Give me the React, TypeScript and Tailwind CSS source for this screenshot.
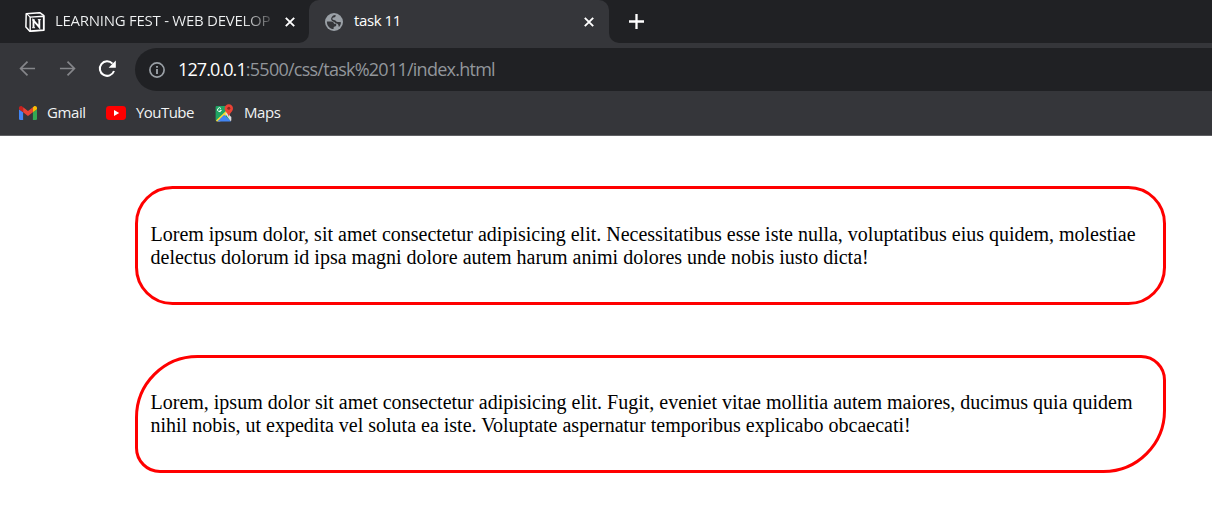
import React from "react";

function NotionIcon() {
  return (
    <svg className="h-5 w-5 shrink-0" viewBox="0 0 20 20">
      <path d="M1.2 1.8 14.8.7 18.9 3.6V18.2L4.8 19.3.9 15.1Z" fill="#202124" stroke="#fff" strokeWidth="1.5" strokeLinejoin="round" />
      <path d="M5.2 5.1 18.6 4.2V18L5.2 18.9Z" fill="#202124" stroke="#fff" strokeWidth="1.4" strokeLinejoin="round" />
      <path d="M2 2.2 5.2 5.1" stroke="#fff" strokeWidth="1.1" />
      <path d="M8.5 15.4V8.5L14.3 15.2V7.9" fill="none" stroke="#fff" strokeWidth="1.9" />
      <path d="M7 8h3M7.2 15.7h2.9M12.8 7.6h3" stroke="#fff" strokeWidth="1" />
    </svg>
  );
}

function GlobeIcon() {
  return (
    <svg className="h-[18px] w-[18px] shrink-0" viewBox="0 0 18 18">
      <circle cx="9" cy="9" r="9" fill="#9aa0a6" />
      <path d="M1.9 8.4H6C8.2 8.4 9 9.4 9 10.8H11.2V12.8C10.6 13.6 9.2 13.2 8.6 14.4V16C4.8 15.8 1.7 12.5 1.9 8.4ZM10.6 2.1C10.8 3.8 10 4.6 8.6 4.6 7.2 4.8 7 6.2 8 6.8 9.4 7.4 10.4 6.8 11 8.2 11.8 9.4 13.6 8.6 16 9.2 15.9 11.1 15.1 12.9 13.8 14.1 13.7 12.5 13.4 11 11.6 10.4 10 10.2 9.8 8.8 8 8.4 6.4 7.8 5.6 6.2 6.4 4.8 7.2 3.2 8.4 2 10.6 2.1Z" fill="#35363a" />
    </svg>
  );
}

function CloseIcon() {
  return (
    <svg className="h-[10px] w-[10px] shrink-0" viewBox="0 0 10 10">
      <path d="m.8.8 8.4 8.4M9.2.8.8 9.2" stroke="#fff" strokeWidth="1.9" />
    </svg>
  );
}

function ArrowIcon({ className }: { className?: string }) {
  return (
    <svg className={className} viewBox="0 0 18 18" fill="none" stroke="#85868a" strokeWidth="1.8">
      <path d="M17 9H2M9 1.7 1.7 9 9 16.3" />
    </svg>
  );
}

function ReloadIcon() {
  return (
    <svg className="ml-[22px] h-[18px] w-[19px] shrink-0" viewBox="0 0 19 18">
      <path d="M14.5 3.6A7.3 7.3 0 1 0 16 11" fill="none" stroke="#fff" strokeWidth="2" />
      <path d="M17.8.6v7.2h-7.2Z" fill="#fff" />
    </svg>
  );
}

function InfoIcon() {
  return (
    <svg className="h-4 w-4 shrink-0" viewBox="0 0 16 16">
      <circle cx="8" cy="8" r="7.1" fill="none" stroke="#9aa0a6" strokeWidth="1.7" />
      <path d="M8 7v5M8 4v1.8" stroke="#9aa0a6" strokeWidth="1.9" />
    </svg>
  );
}

function GmailIcon() {
  return (
    <svg className="h-[14px] w-[18px] shrink-0" viewBox="0 0 18 14">
      <path d="M0 3.2 4.1 6.2V14H1.3A1.3 1.3 0 0 1 0 12.7Z" fill="#4285f4" />
      <path d="M13.9 6.2 18 3.2v9.5a1.3 1.3 0 0 1-1.3 1.3h-2.8Z" fill="#34a853" />
      <path d="M4.1 1.2 9 4.9l4.9-3.7v5L9 9.9 4.1 6.2Z" fill="#ea4335" />
      <path d="M0 3.2V2C0 .3 1.9-.6 3.2.5l.9.7v5Z" fill="#c5221f" />
      <path d="M18 3.2V2c0-1.7-1.9-2.6-3.2-1.5l-.9.7v5Z" fill="#fbbc04" />
    </svg>
  );
}

function YouTubeIcon() {
  return (
    <svg className="h-[14px] w-5 shrink-0" viewBox="0 0 20 14">
      <rect width="20" height="14" rx="3.4" fill="#f00" />
      <path d="m8 4 5.2 3L8 10Z" fill="#fff" />
    </svg>
  );
}

function MapsIcon() {
  return (
    <svg className="h-[18px] w-[19px] shrink-0" viewBox="0 0 19 18">
      <path d="M1.7 2H15v15H1.7Q.6 17 .6 16V3Q.6 2 1.7 2Z" fill="#1fa463" />
      <path d="M1 16.5 13.8 4.2l2 2L5 17.5H1.7Z" fill="#fdd835" />
      <path d="m2.2 17.5 7-6.8 6.8 6.8Z" fill="#4285f4" />
      <path d="m10.2 9.8 1.5-1.4 4.6 4.6V16q0 1-.6 1.2Z" fill="#dadce0" />
      <path d="M6 4.6a1.9 1.9 0 1 0 .3 1.7H4.6" fill="none" stroke="#fff" strokeWidth="1" />
      <path d="M13.8.2A4.2 4.2 0 0 1 18 4.4c0 3.2-3.4 4-4.2 8.4C13 8.4 9.6 7.6 9.6 4.4A4.2 4.2 0 0 1 13.8.2Z" fill="#ea4335" />
      <circle cx="13.8" cy="4.3" r="1.5" fill="#8c2720" />
    </svg>
  );
}

function TabBar() {
  return (
    <div className="flex h-[43px] bg-[#35363a]">
      <div className="flex w-[309px] shrink-0 items-center rounded-br-[10px] bg-[#202124] pl-[25px]">
        <NotionIcon />
        <span className="mb-[3px] ml-[10px] w-[215px] shrink-0 whitespace-nowrap bg-linear-to-r from-[#f1f3f4] from-87% to-[#f1f3f4]/25 bg-clip-text text-[15px] leading-5 tracking-[-0.27px] text-transparent">
          LEARNING FEST - WEB DEVELOP
        </span>
        <span className="ml-[15px]"><CloseIcon /></span>
      </div>
      <div className="w-[300px] shrink-0 bg-[#202124]">
        <div className="flex h-full items-center rounded-t-[10px] bg-[#35363a] pr-[15px] pl-4">
          <GlobeIcon />
          <span className="mb-[3px] ml-[11px] flex-1 text-[15px] leading-5 tracking-[-0.4px] text-white">task 11</span>
          <CloseIcon />
        </div>
      </div>
      <div className="flex flex-1 items-center rounded-bl-[10px] bg-[#202124] pl-5">
        <svg className="h-[15px] w-[15px]" viewBox="0 0 15 15">
          <path d="M7.5 0v15M0 7.5h15" stroke="#fff" strokeWidth="2.3" />
        </svg>
      </div>
    </div>
  );
}

function Toolbar() {
  return (
    <div className="flex h-12 items-start bg-[#35363a] pt-[5px]">
      <div className="flex h-[43px] w-[135px] shrink-0 items-center pb-[2px] pl-[19px]">
        <ArrowIcon className="h-[17px] w-[17px] shrink-0" />
        <ArrowIcon className="ml-[23px] h-[17px] w-[17px] shrink-0 rotate-180" />
        <ReloadIcon />
      </div>
      <div className="flex h-[43px] flex-1 items-center rounded-l-full bg-[#202124] pl-[14px]">
        <InfoIcon />
        <span className="mb-[2px] ml-[13px] text-[18px] leading-6 tracking-[-0.75px] whitespace-nowrap text-[#92969b]">
          <span className="tracking-[-0.9px] text-white">127.0.0.1</span>:5500/css/task%2011/index.html
        </span>
      </div>
    </div>
  );
}

function Bookmarks() {
  return (
    <div className="flex h-[45px] items-center border-b border-[#5f6063] bg-[#35363a] text-[15px] leading-5 text-[#f1f3f4]">
      <div className="flex w-[106px] items-center pl-[19px]">
        <GmailIcon />
        <span className="mb-[2px] ml-[10px] tracking-[-0.4px]">Gmail</span>
      </div>
      <div className="flex w-[109px] items-center">
        <YouTubeIcon />
        <span className="mb-[2px] ml-[10px] tracking-[-0.55px]">YouTube</span>
      </div>
      <div className="flex items-center">
        <MapsIcon />
        <span className="mb-[2px] ml-[10px] tracking-[-0.45px]">Maps</span>
      </div>
    </div>
  );
}

export default function App() {
  return (
    <div className="flex h-[518px] w-[1212px] flex-col overflow-hidden bg-white">
      <header className="font-['Open_Sans','Noto_Sans',sans-serif]">
        <TabBar />
        <Toolbar />
        <Bookmarks />
      </header>
      <main className="flex flex-col gap-[50px] pt-[50px] pr-[46px] pl-[135px] font-['Liberation_Serif',serif] text-[20px] leading-[23px] text-black">
        <div className="h-[119px] rounded-[37.5px] border-3 border-[#f00] pt-[34px] pl-[12.5px]">
          <p className="whitespace-nowrap">
            Lorem ipsum dolor, sit amet consectetur adipisicing elit. Necessitatibus esse iste nulla, voluptatibus eius quidem, molestiae
            <br />
            delectus dolorum id ipsa magni dolore autem harum animi dolores unde nobis iusto dicta!
          </p>
        </div>
        <div className="h-[118px] rounded-[62.5px_25px] border-3 border-[#f00] pt-[33px] pl-[12.5px]">
          <p className="whitespace-nowrap">
            Lorem, ipsum dolor sit amet consectetur adipisicing elit. Fugit, eveniet vitae mollitia autem maiores, ducimus quia quidem
            <br />
            nihil nobis, ut expedita vel soluta ea iste. Voluptate aspernatur temporibus explicabo obcaecati!
          </p>
        </div>
      </main>
    </div>
  );
}
